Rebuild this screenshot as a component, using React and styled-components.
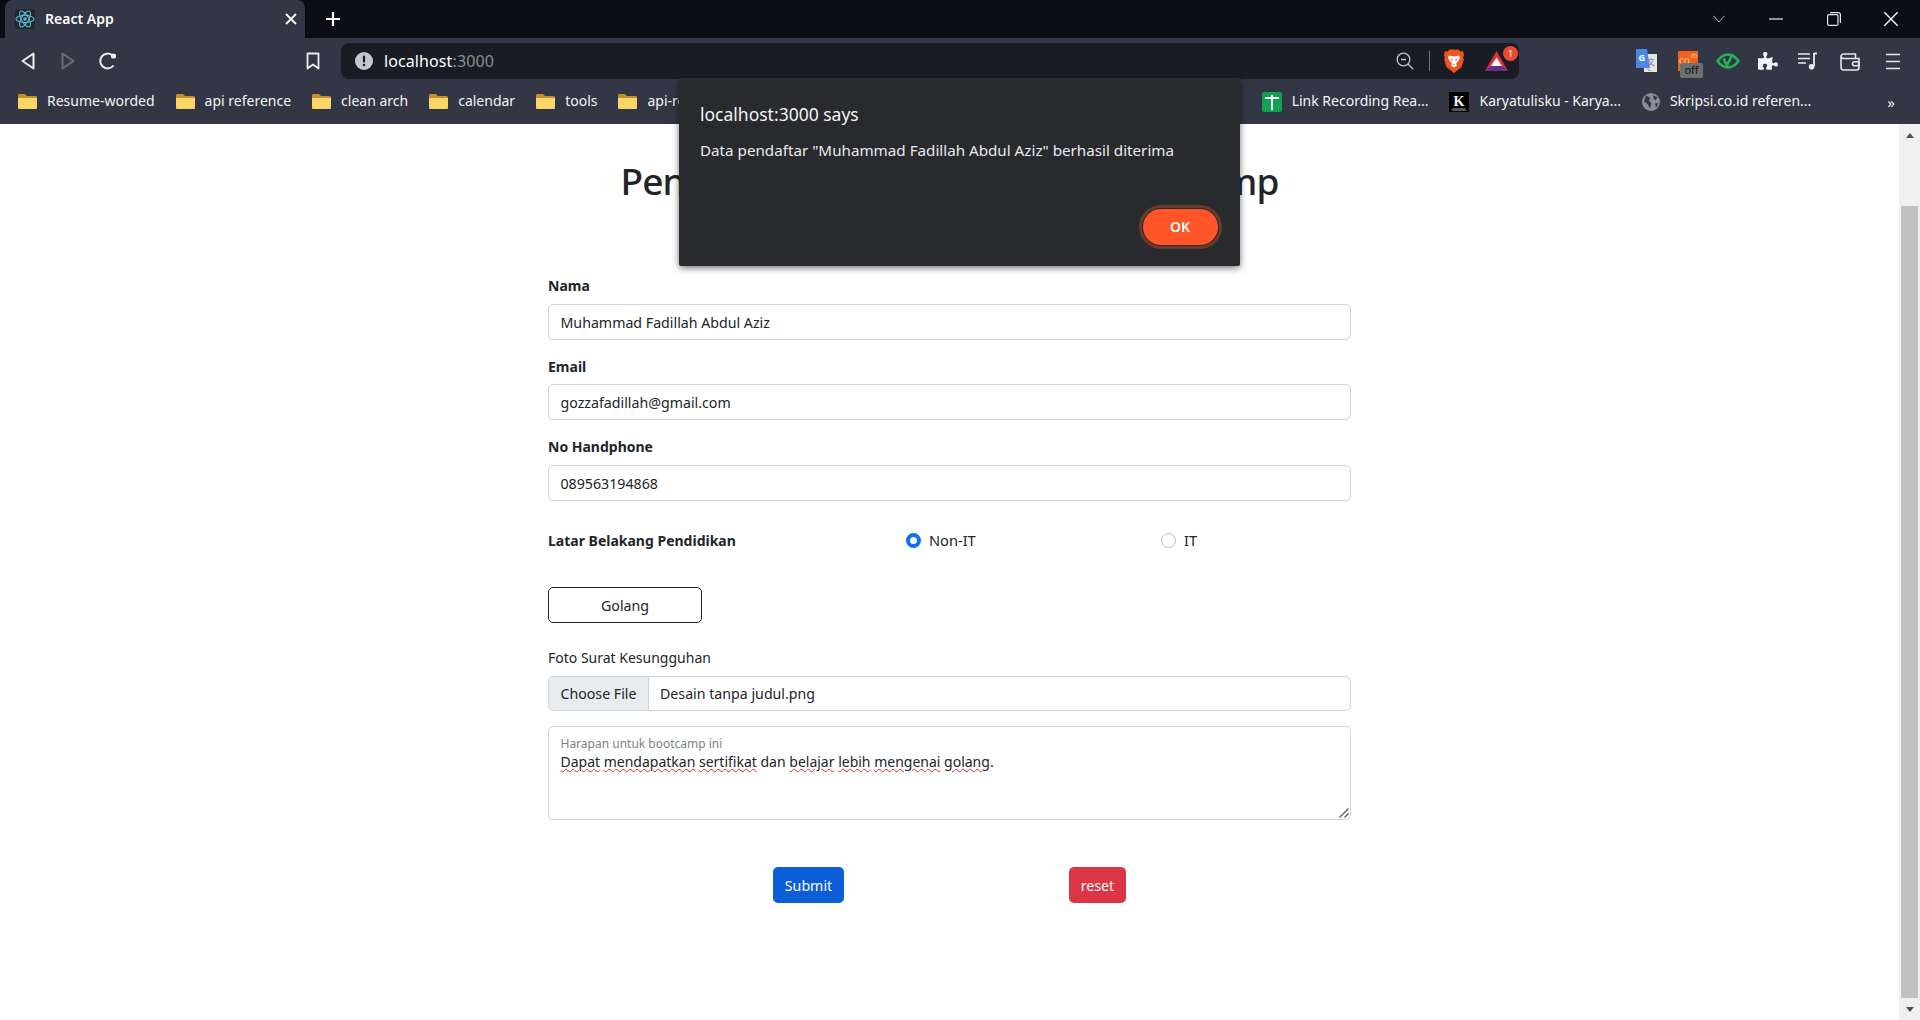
import React from 'react';
import styled, { createGlobalStyle } from 'styled-components';
import { FaPuzzlePiece } from 'react-icons/fa';

const GlobalStyle = createGlobalStyle`
  html, body {
    margin: 0;
    height: 100%;
    overflow: hidden;
    background: #fff;
    font-family: "Noto Sans", "Open Sans", sans-serif;
  }
  * { box-sizing: border-box; }
`;

const Screen = styled.div`
  position: relative;
  height: 1020px;
  display: flex;
  flex-direction: column;
`;

/* browser chrome */
const TabStrip = styled.div`
  height: 38px;
  background: #0b0c14;
  display: flex;
  align-items: flex-end;
  padding-left: 5px;
  color: #fff;
`;
const Tab = styled.div`
  width: 300px;
  height: 38px;
  background: #333644;
  border-radius: 8px 8px 0 0;
  display: flex;
  align-items: center;
  padding: 0 8px 0 10px;
`;
const TabTitle = styled.span`
  margin-left: 10px;
  flex: 1;
  font-size: 14px;
  font-weight: 600;
  white-space: nowrap;
  margin-top: -2px;
`;
const NewTab = styled.div`
  width: 56px;
  height: 38px;
  display: flex;
  align-items: center;
  justify-content: center;
`;
const WindowControls = styled.div`
  margin-left: auto;
  display: flex;
  height: 38px;
  align-items: center;
`;
const WindowButton = styled.div`
  width: 57.5px;
  display: flex;
  justify-content: center;
`;

const Toolbar = styled.div`
  height: 41px;
  background: #333644;
  display: flex;
  align-items: flex-start;
  padding: 5px 6px 0 8px;
`;
const ToolButton = styled.div`
  width: ${(p) => p.$w || 40}px;
  height: 36px;
  margin-left: ${(p) => p.$ml || 0}px;
  display: flex;
  align-items: center;
  justify-content: center;
  color: #e8e9ec;
  flex: none;
  position: relative;
`;
const UrlBar = styled.div`
  width: 1178px;
  height: 36px;
  margin-left: 8px;
  background: #191c24;
  border-radius: 8px;
  display: flex;
  align-items: center;
  padding-left: 14px;
  flex: none;
`;
const UrlHost = styled.span`
  margin-left: 11px;
  font-size: 16px;
  color: #fff;
  letter-spacing: 0.1px;
`;
const UrlPort = styled.span`
  color: #8b8d94;
`;
const UrlActions = styled.div`
  margin-left: auto;
  display: flex;
  align-items: center;
`;
const UrlDivider = styled.div`
  width: 1px;
  height: 20px;
  background: #70727a;
  margin: 0 14px 0 15px;
`;
const Extensions = styled.div`
  margin-left: auto;
  display: flex;
`;
const Badge = styled.span`
  position: absolute;
  right: 1px;
  top: 3px;
  width: 15px;
  height: 15px;
  border-radius: 50%;
  background: #ee4a30;
  color: #fff;
  font-size: 9px;
  line-height: 15px;
  text-align: center;
`;
const OffTag = styled.span`
  position: absolute;
  left: 13px;
  top: 20px;
  width: 23px;
  height: 15px;
  border-radius: 2px;
  background: #6d6f72;
  color: #111;
  font-size: 11px;
  line-height: 14px;
  text-align: center;
`;

const BookmarkBar = styled.div`
  height: 45px;
  background: #333644;
  display: flex;
  align-items: center;
  padding: 0 25px 0 18px;
  flex: none;
`;
const BookmarkItem = styled.div`
  display: flex;
  align-items: center;
  gap: 10px;
  margin-right: ${(p) => p.$mr ?? 21}px;
  color: #f4f4f6;
  font-size: 14px;
  white-space: nowrap;
`;
const BookmarkName = styled.span`
  margin-top: -2px;
`;
const BookmarkRight = styled.div`
  margin-left: auto;
  display: flex;
  align-items: center;
`;
const More = styled.span`
  margin-left: 76px;
  color: #e8e9ec;
  font-size: 15px;
`;

/* page */
const Viewport = styled.div`
  flex: 1;
  display: flex;
  min-height: 0;
`;
const Main = styled.main`
  flex: 1;
  display: flex;
  flex-direction: column;
  align-items: center;
  padding-top: 33px;
  color: #212529;
`;
const Heading = styled.h1`
  margin: 0 0 68px;
  font-size: 37px;
  letter-spacing: -0.85px;
  line-height: 48px;
  font-weight: 500;
  white-space: nowrap;
`;
const Form = styled.form`
  width: 803px;
  font-size: 14.2px;
`;
const Group = styled.div`
  margin-bottom: 14px;
`;
const Label = styled.div`
  height: 24px;
  line-height: ${(p) => (p.$plain ? 24 : 26)}px;
  margin-bottom: 6.5px;
  font-weight: ${(p) => (p.$plain ? 400 : 700)};
  font-size: 14px;
`;
const Input = styled.div`
  height: 36px;
  border: 1px solid #ced4da;
  border-radius: 5px;
  padding: 0 11.5px;
  line-height: 36px;
  background: #fff;
`;
const RadioRow = styled.div`
  display: grid;
  grid-template-columns: 358px 255px 1fr;
  align-items: center;
  height: 24px;
  margin-top: 28px;
  margin-bottom: 34px;
`;
const RadioTitle = styled.div`
  font-size: 14px;
  font-weight: 700;
`;
const RadioOption = styled.div`
  display: flex;
  align-items: center;
  gap: 8px;
`;
const RadioText = styled.span`
  font-size: 14.6px;
  margin-top: -2px;
`;
const RadioDot = styled.span`
  width: 15px;
  height: 15px;
  border-radius: 50%;
  flex: none;
  background: #fff;
  border: ${(p) => (p.$on ? '4.5px solid #0d6efd' : '1px solid #b5bac0')};
`;
const OutlineButton = styled.div`
  width: 154px;
  height: 36px;
  border: 1px solid #212529;
  border-radius: 5px;
  text-align: center;
  line-height: 36px;
  margin-bottom: 23px;
`;
const FileField = styled.div`
  height: 35px;
  border: 1px solid #ced4da;
  border-radius: 5px;
  display: flex;
  overflow: hidden;
  line-height: 33px;
  margin-bottom: 15px;
`;
const FileButton = styled.div`
  width: 100px;
  background: #e9ecef;
  border-right: 1px solid #ced4da;
  text-align: center;
  flex: none;
`;
const FileName = styled.div`
  padding-left: 11px;
`;
const TextArea = styled.div`
  position: relative;
  height: 94px;
  border: 1px solid #ced4da;
  border-radius: 5px;
  padding: 8px 11.5px 0;
`;
const FloatingLabel = styled.div`
  font-size: 12px;
  line-height: 18px;
  color: #7d8287;
`;
const AreaText = styled.div`
  font-size: 14px;
  line-height: 18px;
`;
const Misspelt = styled.span`
  text-decoration: underline wavy #e0262c 1px;
  text-underline-offset: 1px;
`;
const ResizeGrip = styled.svg`
  position: absolute;
  right: 1px;
  bottom: 1px;
`;
const Actions = styled.div`
  display: flex;
  justify-content: space-evenly;
  margin-top: 47px;
`;
const ActionButton = styled.div`
  width: ${(p) => p.$w}px;
  height: 36px;
  border-radius: 5px;
  background: ${(p) => p.$bg};
  color: #fff;
  text-align: center;
  line-height: 38px;
`;

const Scrollbar = styled.div`
  width: 21px;
  background: #f0f0f0;
  display: flex;
  flex-direction: column;
  align-items: center;
`;
const ScrollArrow = styled.div`
  height: 22px;
  display: flex;
  align-items: center;
  justify-content: center;
  flex: none;
  &::before {
    content: '';
    border-left: 4.5px solid transparent;
    border-right: 4.5px solid transparent;
    ${(p) => (p.$down ? 'border-top' : 'border-bottom')}: 5px solid #505050;
  }
`;
const ScrollTrack = styled.div`
  flex: 1;
  width: 100%;
  padding: 60px 2px 0;
`;
const ScrollThumb = styled.div`
  height: 100%;
  background: #c1c1c1;
`;

/* alert */
const Dialog = styled.div`
  position: absolute;
  left: 679px;
  top: 78px;
  width: 561px;
  height: 188px;
  background: #292a2d;
  border-radius: 0 0 2px 2px;
  box-shadow: 0 2px 7px rgba(0, 0, 0, 0.55);
  color: #e8eaed;
  padding: 23px 22.5px 21px 21px;
  display: flex;
  flex-direction: column;
`;
const DialogTitle = styled.div`
  font-size: 17.5px;
  line-height: 26px;
  color: #f1f3f4;
`;
const DialogText = styled.div`
  font-size: 15.2px;
  line-height: 22px;
  margin-top: 12px;
`;
const OkButton = styled.div`
  align-self: flex-end;
  margin-top: auto;
  width: 75px;
  height: 36px;
  border-radius: 18px;
  background: #ff5528;
  box-shadow: 0 0 0 1px #292a2d, 0 0 0 4px #6b3a2e;
  color: #fff;
  font-size: 14px;
  font-weight: 600;
  text-align: center;
  line-height: 36px;
`;

/* icons */
const ReactLogo = () => (
  <svg width="20" height="20" viewBox="0 0 20 20" style={{ flex: 'none' }}>
    <rect width="20" height="20" rx="3" fill="#23272b" />
    <g fill="none" stroke="#53b9d3" strokeWidth="1.1">
      <ellipse cx="10" cy="10" rx="9" ry="3.6" />
      <ellipse cx="10" cy="10" rx="9" ry="3.6" transform="rotate(60 10 10)" />
      <ellipse cx="10" cy="10" rx="9" ry="3.6" transform="rotate(120 10 10)" />
    </g>
    <circle cx="10" cy="10" r="1.8" fill="#53b9d3" />
  </svg>
);

const Cross = ({ size = 12, width = 1.8 }) => (
  <svg width={size} height={size} viewBox="0 0 12 12" style={{ flex: 'none' }}>
    <path d="M1 1L11 11M11 1L1 11" stroke="#fff" strokeWidth={width} />
  </svg>
);

const Plus = () => (
  <svg width="16" height="16" viewBox="0 0 16 16">
    <path d="M8 1V15M1 8H15" stroke="#fff" strokeWidth="2.2" />
  </svg>
);

const Triangle = ({ left, color }) => (
  <svg width="14" height="18" viewBox="0 0 14 18">
    <path
      d={left ? 'M12.5 1.5V16.5L1.5 9Z' : 'M1.5 1.5V16.5L12.5 9Z'}
      fill="none"
      stroke={color}
      strokeWidth="2"
      strokeLinejoin="round"
    />
  </svg>
);

const Reload = () => (
  <svg width="20" height="20" viewBox="0 0 20 20">
    <path d="M15.5 14.5A7.4 7.4 0 1 1 14 4" fill="none" stroke="#eceded" strokeWidth="2" />
    <circle cx="15.5" cy="5" r="2.6" fill="#eceded" />
  </svg>
);

const BookmarkIcon = () => (
  <svg width="14" height="18" viewBox="0 0 14 18">
    <path d="M1.5 1.5H12.5V16.5L7 12.5L1.5 16.5Z" fill="none" stroke="#eceded" strokeWidth="1.8" strokeLinejoin="round" />
  </svg>
);

const AlertIcon = () => (
  <svg width="18" height="18" viewBox="0 0 18 18" style={{ flex: 'none' }}>
    <circle cx="9" cy="9" r="9" fill="#c5c6ca" />
    <rect x="7.9" y="3.5" width="2.2" height="7" rx="1" fill="#191c24" />
    <circle cx="9" cy="13" r="1.3" fill="#191c24" />
  </svg>
);

const ZoomOut = () => (
  <svg width="18" height="18" viewBox="0 0 18 18">
    <circle cx="7.5" cy="7.5" r="6.3" fill="none" stroke="#c8c9cc" strokeWidth="1.3" />
    <path d="M12 12L17 17M5 7.5H10" stroke="#c8c9cc" strokeWidth="1.3" />
  </svg>
);

const BraveLogo = () => (
  <svg width="20" height="24" viewBox="0 0 20 24">
    <path d="M5.5 0.5H14.5L16.5 2.5L19 2L20 6L19 9L20 10L17.5 18L10 24L2.5 18L0 10L1 9L0 6L1 2L3.5 2.5Z" fill="#f1531f" />
    <path d="M5 6.5L8.5 7.2H11.5L15 6.5L16 9L13.5 13L12 14.5L13 16.5L10 18.5L7 16.5L8 14.5L6.5 13L4 9Z" fill="#fff" />
    <path d="M6.5 9.5L9 10.5L8 12ZM13.5 9.5L11 10.5L12 12ZM9 15H11L10 16.5Z" fill="#f1531f" />
  </svg>
);

const BatLogo = () => (
  <svg width="23" height="20" viewBox="0 0 23 20">
    <path d="M11.5 0L23 20H0Z" fill="#e0302f" />
    <path d="M0 20H23L17 15H6Z" fill="#662d91" />
    <path d="M11.5 6.5L17 15H6Z" fill="#fff" />
  </svg>
);

const TranslateIcon = () => (
  <svg width="21" height="24" viewBox="0 0 21 24">
    <rect x="8" y="5" width="13" height="18" fill="#e6e6e6" />
    <path d="M10 18l2.5 4H16z" fill="#b8b8b8" />
    <text x="11" y="16" fontSize="8" fill="#777" fontFamily="Noto Sans CJK SC, sans-serif">文</text>
    <path d="M0 0H11L14 19H0Z" fill="#4a86e8" />
    <text x="2.5" y="12" fontSize="9" fontWeight="700" fill="#fff" fontFamily="Noto Sans, sans-serif">G</text>
  </svg>
);

const ComIcon = () => (
  <svg width="20" height="20" viewBox="0 0 20 20">
    <rect width="20" height="20" fill="#f4611d" />
    <text x="1" y="13" fontSize="10" fill="#f8c9a8" fontFamily="Noto Sans, sans-serif">co</text>
    <text x="13" y="7" fontSize="7" fill="#f8c9a8" fontFamily="Noto Sans, sans-serif">m</text>
  </svg>
);

const GreenEye = () => (
  <svg width="24" height="18" viewBox="0 0 24 18">
    <path d="M1.5 9C5.500 3.500 8.500 2.500 12 2.500S18.500 3.500 22.500 9C18.500 14.500 15.500 15.500 12 15.500S5.500 14.500 1.500 9Z" fill="none" stroke="#22b455" strokeWidth="2.4" />
    <path d="M7.500 6.500L11 13.500L16.500 2" fill="none" stroke="#22b455" strokeWidth="2.600" />
  </svg>
);

const MusicList = () => (
  <svg width="20" height="20" viewBox="0 0 20 20">
    <path d="M0 3H12M0 7.5H12M0 12H8" stroke="#e8e9ec" strokeWidth="1.7" />
    <path d="M16 2.5H19M16 2V15.5" stroke="#e8e9ec" strokeWidth="1.8" fill="none" />
    <circle cx="13.5" cy="15.8" r="2.8" fill="#e8e9ec" />
  </svg>
);

const Wallet = () => (
  <svg width="20" height="19" viewBox="0 0 20 19">
    <path d="M1 4.5V15.5A2.5 2.5 0 0 0 3.500 18H16.5A2.500 2.500 0 0 0 19 15.500V6.500H3.500A2.500 2.500 0 0 1 1 4.500A2.500 2.500 0 0 1 3.500 2H15.500V6" fill="none" stroke="#e8e9ec" strokeWidth="1.6" />
    <rect x="12.500" y="9.800" width="6.500" height="4" rx="2" fill="none" stroke="#e8e9ec" strokeWidth="1.600" />
  </svg>
);

const Hamburger = () => (
  <svg width="14" height="17" viewBox="0 0 14 17">
    <path d="M0 1.500H14M0 8.500H14M0 15.500H14" stroke="#e8e9ec" strokeWidth="1.700" />
  </svg>
);

const Chevron = () => (
  <svg width="12" height="8" viewBox="0 0 12 8">
    <path d="M0.500 0.800L6 7L11.500 0.800" fill="none" stroke="#b5b6bb" strokeWidth="1" />
  </svg>
);

const Minimize = () => (
  <svg width="14" height="2" viewBox="0 0 14 2">
    <path d="M0 1H14" stroke="#e8e9ec" strokeWidth="1.200" />
  </svg>
);

const Restore = () => (
  <svg width="14" height="14" viewBox="0 0 14 14">
    <rect x="0.600" y="2.600" width="10.400" height="10.800" rx="1.500" fill="none" stroke="#e8e9ec" strokeWidth="1.200" />
    <path d="M3 0.600H11.500A2 2 0 0 1 13.400 2.600V11" fill="none" stroke="#e8e9ec" strokeWidth="1.200" />
  </svg>
);

const Folder = () => (
  <svg width="19" height="15" viewBox="0 0 19 15" style={{ flex: 'none' }}>
    <path d="M1.500 0H7L9 2H17.500A1.500 1.500 0 0 1 19 3.500V13.500A1.500 1.500 0 0 1 17.500 15H1.500A1.500 1.500 0 0 1 0 13.500V1.500A1.500 1.500 0 0 1 1.500 0Z" fill="#c28f2c" />
    <path d="M0 4H19V13.500A1.500 1.500 0 0 1 17.500 15H1.500A1.500 1.500 0 0 1 0 13.500Z" fill="#fbd566" />
  </svg>
);

const SheetIcon = () => (
  <svg width="20" height="20" viewBox="0 0 20 20" style={{ flex: 'none' }}>
    <rect width="20" height="20" rx="2" fill="#12a150" />
    <path d="M3 6H17M10 3V18" stroke="#fff" strokeWidth="2" />
  </svg>
);

const KIcon = () => (
  <svg width="20" height="20" viewBox="0 0 20 20" style={{ flex: 'none' }}>
    <rect width="20" height="20" fill="#000" />
    <text x="10" y="14" textAnchor="middle" fontSize="14" fontWeight="700" fill="#fff" fontFamily="Liberation Serif, serif">K</text>
    <path d="M4 16H16L18 19H2Z" fill="#555" />
  </svg>
);

const Globe = () => (
  <svg width="18" height="18" viewBox="0 0 18 18" style={{ flex: 'none' }}>
    <circle cx="9" cy="9" r="9" fill="#8b8e98" />
    <path d="M4 2.500L8 4.500L7 8L9.500 10L8 15.500L5.500 11L2 8.500ZM11 2L15.500 4.500L13.500 7.500L11.500 5.500ZM13 10.500L16.500 10L14 15Z" fill="#333644" />
  </svg>
);

const Grip = () => (
  <ResizeGrip width="11" height="11" viewBox="0 0 11 11">
    <path d="M1.500 10.500L10.500 1.500M6.500 10.500L10.500 6.500" stroke="#555" strokeWidth="1.200" />
  </ResizeGrip>
);

const leftBookmarks = ['Resume-worded', 'api reference', 'clean arch', 'calendar', 'tools', 'api-reference'];

const App = () => {
  return (
    <Screen>
      <GlobalStyle />
      <TabStrip>
        <Tab>
          <ReactLogo />
          <TabTitle>React App</TabTitle>
          <Cross />
        </Tab>
        <NewTab>
          <Plus />
        </NewTab>
        <WindowControls>
          <WindowButton><Chevron /></WindowButton>
          <WindowButton><Minimize /></WindowButton>
          <WindowButton><Restore /></WindowButton>
          <WindowButton><Cross size={16} width={1} /></WindowButton>
        </WindowControls>
      </TabStrip>

      <Toolbar>
        <ToolButton><Triangle left color="#eceded" /></ToolButton>
        <ToolButton><Triangle color="#6c6e78" /></ToolButton>
        <ToolButton><Reload /></ToolButton>
        <ToolButton $ml={165}><BookmarkIcon /></ToolButton>
        <UrlBar>
          <AlertIcon />
          <UrlHost>localhost<UrlPort>:3000</UrlPort></UrlHost>
          <UrlActions>
            <ZoomOut />
            <UrlDivider />
            <BraveLogo />
            <ToolButton $w={46} $ml={9}>
              <BatLogo />
              <Badge>1</Badge>
            </ToolButton>
          </UrlActions>
        </UrlBar>
        <Extensions>
          <ToolButton $w={41}><TranslateIcon /></ToolButton>
          <ToolButton $w={41}>
            <ComIcon />
            <OffTag>off</OffTag>
          </ToolButton>
          <ToolButton $w={40}><GreenEye /></ToolButton>
          <ToolButton $w={40}><FaPuzzlePiece size={20} color="#f2f2f4" /></ToolButton>
          <ToolButton $w={40}><MusicList /></ToolButton>
          <ToolButton $w={44}><Wallet /></ToolButton>
          <ToolButton $w={42}><Hamburger /></ToolButton>
        </Extensions>
      </Toolbar>

      <BookmarkBar>
        {leftBookmarks.map((name) => (
          <BookmarkItem key={name}>
            <Folder />
            <BookmarkName>{name}</BookmarkName>
          </BookmarkItem>
        ))}
        <BookmarkRight>
          <BookmarkItem><SheetIcon /><BookmarkName>Link Recording Rea...</BookmarkName></BookmarkItem>
          <BookmarkItem><KIcon /><BookmarkName>Karyatulisku - Karya...</BookmarkName></BookmarkItem>
          <BookmarkItem $mr={0}><Globe /><BookmarkName>Skripsi.co.id referen...</BookmarkName></BookmarkItem>
          <More>»</More>
        </BookmarkRight>
      </BookmarkBar>

      <Viewport>
        <Main>
          <Heading>Pendaftaran Peserta Coding Bootcamp</Heading>
          <Form>
            <Group>
              <Label>Nama</Label>
              <Input>Muhammad Fadillah Abdul Aziz</Input>
            </Group>
            <Group>
              <Label>Email</Label>
              <Input>gozzafadillah@gmail.com</Input>
            </Group>
            <Group>
              <Label>No Handphone</Label>
              <Input>089563194868</Input>
            </Group>
            <RadioRow>
              <RadioTitle>Latar Belakang Pendidikan</RadioTitle>
              <RadioOption><RadioDot $on /><RadioText>Non-IT</RadioText></RadioOption>
              <RadioOption><RadioDot /><RadioText>IT</RadioText></RadioOption>
            </RadioRow>
            <OutlineButton>Golang</OutlineButton>
            <Label $plain>Foto Surat Kesungguhan</Label>
            <FileField>
              <FileButton>Choose File</FileButton>
              <FileName>Desain tanpa judul.png</FileName>
            </FileField>
            <TextArea>
              <FloatingLabel>Harapan untuk bootcamp ini</FloatingLabel>
              <AreaText>
                <Misspelt>Dapat</Misspelt> <Misspelt>mendapatkan</Misspelt>{' '}
                <Misspelt>sertifikat</Misspelt> dan <Misspelt>belajar</Misspelt>{' '}
                <Misspelt>lebih</Misspelt> <Misspelt>mengenai</Misspelt>{' '}
                <Misspelt>golang</Misspelt>.
              </AreaText>
              <Grip />
            </TextArea>
            <Actions>
              <ActionButton $w={71} $bg="#0b5ed7">Submit</ActionButton>
              <ActionButton $w={57} $bg="#dc3545">reset</ActionButton>
            </Actions>
          </Form>
        </Main>
        <Scrollbar>
          <ScrollArrow />
          <ScrollTrack><ScrollThumb /></ScrollTrack>
          <ScrollArrow $down />
        </Scrollbar>
      </Viewport>

      <Dialog>
        <DialogTitle>localhost:3000 says</DialogTitle>
        <DialogText>Data pendaftar "Muhammad Fadillah Abdul Aziz" berhasil diterima</DialogText>
        <OkButton>OK</OkButton>
      </Dialog>
    </Screen>
  );
};

export default App;
